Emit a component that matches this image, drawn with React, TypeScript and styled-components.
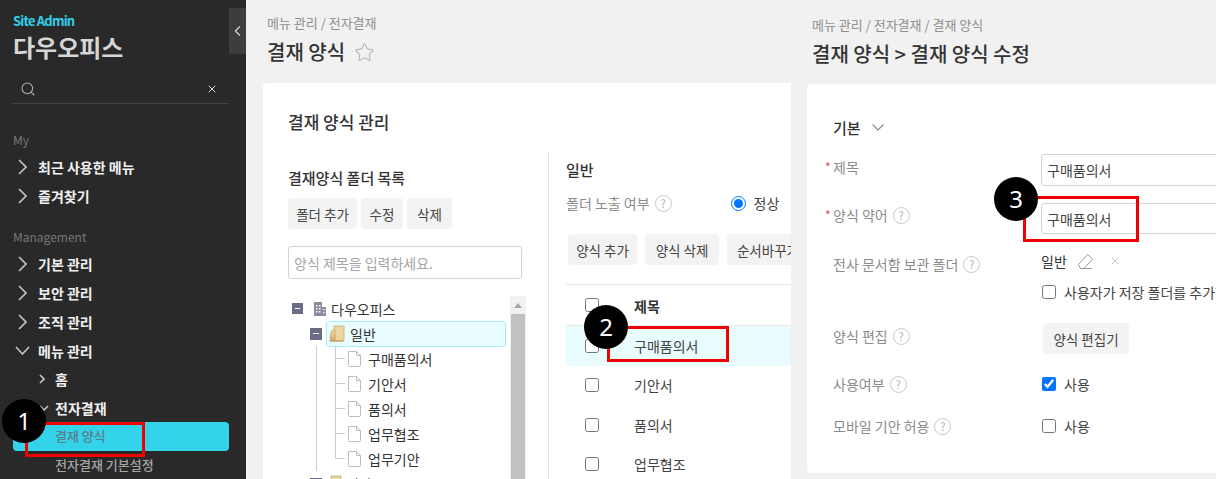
import React from "react";
import styled, { createGlobalStyle } from "styled-components";
import { Search, X, Star, ChevronLeft } from "lucide-react";

const Global = createGlobalStyle`
  html, body { margin: 0; padding: 0; background: #f1f1f1; }
  body { font-family: "Noto Sans CJK KR", "Noto Sans", sans-serif; }
  * { box-sizing: border-box; }
`;

const Page = styled.div`
  position: relative;
  width: 1216px;
  height: 479px;
  overflow: hidden;
  display: flex;
  background: #f1f1f1;
`;

/* ---------- sidebar ---------- */
const Sidebar = styled.aside`
  position: relative;
  width: 246px;
  flex: none;
  height: 100%;
  background: #292929;
  padding: 13px 17px 0 13px;
`;
const CollapseTab = styled.div`
  position: absolute;
  left: 229px;
  top: 8px;
  width: 17px;
  height: 46px;
  background: #3d3d3d;
  color: #d8d8d8;
  display: flex;
  align-items: center;
  justify-content: center;
`;
const SiteAdmin = styled.div`
  font-size: 13px;
  line-height: 16px;
  font-weight: 700;
  letter-spacing: -0.8px;
  color: #2fd0ea;
`;
const Brand = styled.div`
  font-size: 24px;
  line-height: 36px;
  font-weight: 700;
  color: #d6d6d6;
`;
const SearchBox = styled.div`
  margin-top: 9px;
  height: 30px;
  border-bottom: 1px solid #444;
  display: flex;
  align-items: center;
  justify-content: space-between;
  padding: 0 11px 0 7px;
  color: #b0b0b0;
`;
const SectionLabel = styled.div<{ $top: number }>`
  margin-top: ${(p) => p.$top}px;
  margin-bottom: 2px;
  font-size: 12px;
  line-height: 21px;
  color: #777;
`;
const NavRow = styled.div<{ $pad: number; $iconW: number; $h: number }>`
  display: flex;
  align-items: center;
  height: ${(p) => p.$h}px;
  padding-left: ${(p) => p.$pad}px;
  color: #f0f0f0;
  font-size: 14px;
  font-weight: 700;
  white-space: nowrap;
  & > svg {
    flex: none;
    margin-right: ${(p) => p.$iconW}px;
  }
`;
const SubLink = styled.div<{ $active?: boolean }>`
  height: 29px;
  display: flex;
  align-items: center;
  padding: 0 0 2px 42px;
  font-size: 13px;
  font-weight: 500;
  color: ${(p) => (p.$active ? "#5c7d86" : "#a6a6a6")};
  background: ${(p) => (p.$active ? "#33d3ea" : "transparent")};
  border-radius: 4px;
`;

const ChevR = ({ w, h }: { w: number; h: number }) => (
  <svg width={w} height={h} viewBox={`0 0 ${w} ${h}`} fill="none" stroke="#c4c4c4" strokeWidth="1.6">
    <path d={`M1 1 L${w - 1} ${h / 2} L1 ${h - 1}`} />
  </svg>
);
const ChevD = ({ w, h }: { w: number; h: number }) => (
  <svg width={w} height={h} viewBox={`0 0 ${w} ${h}`} fill="none" stroke="#c4c4c4" strokeWidth="1.6">
    <path d={`M1 1 L${w / 2} ${h - 1} L${w - 1} 1`} />
  </svg>
);

/* ---------- panels ---------- */
const Panel = styled.main<{ $w: number; $top: number; $gap: number; $inset: number }>`
  width: ${(p) => p.$w}px;
  flex: none;
  padding-top: ${(p) => p.$top}px;
  & > header {
    padding-left: 21px;
    height: ${(p) => p.$gap}px;
  }
  & > section {
    margin-left: ${(p) => p.$inset}px;
  }
`;
const Crumb = styled.div`
  font-size: 13px;
  line-height: 18px;
  color: #8f8f8f;
  white-space: nowrap;
`;
const TitleRow = styled.div`
  margin-top: 6px;
  display: flex;
  align-items: center;
  gap: 9px;
  height: 28px;
  color: #b5b5b5;
`;
const PageTitle = styled.h1`
  margin: 0;
  font-size: 20px;
  line-height: 28px;
  font-weight: 500;
  color: #333;
  white-space: nowrap;
`;
const Card = styled.section<{ $h?: number }>`
  background: #fff;
  border-radius: 4px 0 0 4px;
  height: ${(p) => (p.$h ? `${p.$h}px` : "auto")};
  overflow: hidden;
`;
const ManageCard = styled(Card)`
  padding: 27px 0 0 25px;
  height: 400px;
`;
const CardTitle = styled.h2`
  margin: 0 0 18px;
  font-size: 17px;
  line-height: 24px;
  font-weight: 500;
  color: #333;
`;
const Columns = styled.div`
  display: flex;
`;
const FolderCol = styled.div`
  width: 260px;
  flex: none;
  padding-top: 15px;
`;
const SubTitle = styled.h3`
  margin: 0;
  font-size: 15px;
  line-height: 22px;
  font-weight: 500;
  color: #333;
`;
const Buttons = styled.div<{ $gap: number; $top: number; $left?: number }>`
  display: flex;
  gap: ${(p) => p.$gap}px;
  margin-top: ${(p) => p.$top}px;
  margin-left: ${(p) => p.$left ?? 0}px;
`;
const Btn = styled.div<{ $w: number }>`
  width: ${(p) => p.$w}px;
  height: 31px;
  flex: none;
  display: flex;
  align-items: center;
  justify-content: center;
  background: #f3f3f3;
  border-radius: 4px;
  font-size: 13.5px;
  color: #444;
  white-space: nowrap;
  overflow: hidden;
`;
const FieldInput = styled.div<{ $w: number; $h: number }>`
  width: ${(p) => p.$w}px;
  height: ${(p) => p.$h}px;
  border: 1px solid #d4d4d4;
  border-radius: 3px;
  padding: 0 5px;
  display: flex;
  align-items: center;
  font-size: 14px;
  color: #444;
  flex: none;
`;
const SearchField = styled(FieldInput)`
  margin-top: 17px;
  color: #a5a5a5;
`;

/* ---------- tree ---------- */
const TreeWrap = styled.div`
  margin-top: 17px;
  display: flex;
  width: 238px;
`;
const Tree = styled.div`
  width: 222px;
  flex: none;
`;
const TreeRow = styled.div<{ $pad: number; $gap: number; $vline?: boolean; $stub?: boolean; $last?: boolean }>`
  position: relative;
  height: 25px;
  display: flex;
  align-items: center;
  gap: ${(p) => p.$gap}px;
  padding-left: ${(p) => p.$pad}px;
  font-size: 14px;
  color: #333;
  white-space: nowrap;
  ${(p) =>
    p.$stub
      ? `&::before { content: ""; position: absolute; left: 47px; top: 0; height: ${p.$last ? "13px" : "25px"}; width: 10px; border-left: 1px solid #ccc; }
         &::after { content: ""; position: absolute; left: 47px; top: 12px; width: 10px; border-top: 1px solid #ccc; }`
      : ""}
  ${(p) =>
    p.$vline
      ? `background: linear-gradient(#ccc, #ccc) 28px 0 / 1px 100% no-repeat;`
      : ""}
`;
const Minus = styled.span<{ $s: number; $after?: number }>`
  width: ${(p) => p.$s}px;
  height: ${(p) => p.$s}px;
  flex: none;
  margin-right: ${(p) => p.$after ?? 0}px;
  background: #6a6d85;
  display: flex;
  align-items: center;
  justify-content: center;
  &::after {
    content: "";
    width: ${(p) => p.$s - 6}px;
    height: 1px;
    background: #fff;
  }
`;
const Selected = styled.div`
  width: 180px;
  height: 26px;
  border: 1px solid #a5effa;
  border-radius: 3px;
  background: #e9fcff;
  display: flex;
  align-items: center;
  gap: 5px;
  padding-left: 2px;
`;
const Scrollbar = styled.div`
  width: 16px;
  flex: none;
  background: #f1f1f1;
  height: 190px;
  padding: 0 1px;
`;
const ScrollUp = styled.div`
  height: 18px;
  display: flex;
  align-items: center;
  justify-content: center;
  &::after {
    content: "";
    border: 4px solid transparent;
    border-top: 0;
    border-bottom: 5px solid #a8a8a8;
  }
`;
const ScrollThumb = styled.div`
  height: 170px;
  background: #c1c1c1;
`;

const BuildingIcon = () => (
  <svg width="14" height="16" viewBox="0 0 14 16">
    <path d="M1 1h8v14H1z M9 6h4v9H9z" fill="#8b8d9f" />
    <g fill="#fff">
      <rect x="3" y="4" width="1.5" height="1.5" />
      <rect x="6" y="4" width="1.5" height="1.5" />
      <rect x="3" y="7" width="1.5" height="1.5" />
      <rect x="6" y="7" width="1.5" height="1.5" />
      <rect x="3" y="10" width="1.5" height="1.5" />
      <rect x="6" y="10" width="1.5" height="1.5" />
      <rect x="10.3" y="8" width="1.4" height="1.4" />
      <rect x="10.3" y="11" width="1.4" height="1.4" />
    </g>
  </svg>
);
const FolderIcon = () => (
  <svg width="16" height="17" viewBox="0 0 16 17">
    <defs>
      <linearGradient id="fg" x1="0" y1="0" x2="0" y2="1">
        <stop offset="0" stopColor="#f7e6b4" />
        <stop offset="1" stopColor="#d0a960" />
      </linearGradient>
    </defs>
    <path d="M5 1h10v15H5z" fill="#e9d6a2" stroke="#c9ad6d" strokeWidth="0.8" />
    <path d="M1 16l1-9 3-3 1 1v11z" fill="url(#fg)" stroke="#c9a35a" strokeWidth="0.8" />
    <path d="M1 16h13" stroke="#c29a50" strokeWidth="1" />
  </svg>
);
const DocIcon = () => (
  <svg width="13" height="16" viewBox="0 0 13 16" fill="#fff" stroke="#bdbdbd">
    <path d="M0.5 0.5h8l4 4v10a1 1 0 0 1-1 1h-10a1 1 0 0 1-1-1z" />
    <path d="M8.5 0.5v4h4" fill="none" />
  </svg>
);

/* ---------- list column ---------- */
const ListCol = styled.div`
  flex: 1;
  border-left: 1px solid #e4e4e4;
  padding: 7px 0 0 17px;
  height: 340px;
  overflow: hidden;
`;
const ExposeRow = styled.div`
  margin-top: 10px;
  height: 24px;
  display: flex;
  align-items: center;
  font-size: 14px;
  color: #8c8c8c;
`;
const RadioLabel = styled.label`
  margin-left: 59px;
  display: flex;
  align-items: center;
  gap: 8px;
  color: #444;
  font-size: 14px;
`;
const Radio = styled.input`
  width: 15px;
  height: 15px;
  margin: 0;
`;
const Check = styled.input`
  width: 14px;
  height: 14px;
  margin: 0;
  flex: none;
`;
const HelpMark = styled.span`
  margin-left: 5px;
  width: 17px;
  height: 17px;
  flex: none;
  border: 1px solid #c8c8c8;
  border-radius: 50%;
  display: inline-flex;
  align-items: center;
  justify-content: center;
  font-size: 11px;
  line-height: 1;
  color: #b0b0b0;
`;
const Table = styled.div`
  margin-top: 19px;
  border-top: 1px solid #e4e4e4;
`;
const HeadRow = styled.div`
  height: 41px;
  display: flex;
  align-items: center;
  padding-left: 19px;
  border-bottom: 1px solid #e8e8e8;
  font-size: 14px;
  font-weight: 700;
  color: #333;
  & > span {
    margin-left: 35px;
    padding-top: 1px;
  }
`;
const BodyRow = styled.div<{ $hl?: boolean }>`
  height: 39.5px;
  display: flex;
  align-items: center;
  padding-left: 19px;
  font-size: 14px;
  color: #444;
  background: ${(p) => (p.$hl ? "#e8fbfd" : "transparent")};
  & > span {
    margin-left: 35px;
  }
`;

/* ---------- edit form ---------- */
const EditCard = styled(Card)`
  padding: 31px 0 0 26px;
`;
const FoldHead = styled.div`
  height: 24px;
  display: flex;
  align-items: center;
  gap: 11px;
  font-size: 15px;
  font-weight: 500;
  color: #333;
  margin-bottom: 15px;
`;
const FormRow = styled.div<{ $h: number; $labelTop: number }>`
  height: ${(p) => p.$h}px;
  display: grid;
  grid-template-columns: 208px 1fr;
  & > label {
    padding-top: ${(p) => p.$labelTop}px;
  }
`;
const Label = styled.label`
  display: flex;
  align-items: flex-start;
  height: 24px;
  font-size: 14px;
  line-height: 20px;
  color: #8c8c8c;
  position: relative;
  white-space: nowrap;
  & > span {
    margin-top: 2px;
  }
`;
const Req = styled.i`
  position: absolute;
  left: -8px;
  font-style: normal;
  color: #e2504c;
  font-size: 12px;
`;
const Value = styled.div`
  display: flex;
  flex-direction: column;
  align-items: flex-start;
  font-size: 14px;
  color: #444;
  white-space: nowrap;
`;
const CheckLine = styled.div<{ $top?: number; $left?: number }>`
  display: flex;
  align-items: center;
  gap: 8px;
  height: 20px;
  margin-top: ${(p) => p.$top ?? 0}px;
  margin-left: ${(p) => p.$left ?? 1}px;
  font-size: 14px;
  color: #444;
`;
const FolderValue = styled.div`
  height: 18px;
  margin-top: -1px;
  display: flex;
  align-items: center;
  font-size: 14px;
  color: #333;
  & > svg:first-of-type {
    margin-left: 10px;
  }
  & > svg:last-of-type {
    margin-left: 15px;
    color: #a0a0a0;
  }
`;
const BtnOffset = styled.div`
  margin-left: 2px;
`;

/* ---------- annotations ---------- */
const RedBox = styled.div<{ $x: number; $y: number; $w: number; $h: number }>`
  position: absolute;
  left: ${(p) => p.$x}px;
  top: ${(p) => p.$y}px;
  width: ${(p) => p.$w}px;
  height: ${(p) => p.$h}px;
  border: 3px solid #f00000;
`;
const Badge = styled.div<{ $x: number; $y: number }>`
  position: absolute;
  left: ${(p) => p.$x}px;
  top: ${(p) => p.$y}px;
  width: 44px;
  height: 44px;
  border-radius: 50%;
  background: #000;
  color: #fff;
  font-family: "Noto Sans", sans-serif;
  font-size: 24px;
  line-height: 44px;
  text-align: center;
`;

const PenIcon = () => (
  <svg width="17" height="17" viewBox="0 0 17 17" fill="none" stroke="#9a9a9a" strokeWidth="1">
    <path d="M1.5 11.5L10.5 1.5l5 4.5-8.5 9.5H3.5z" />
    <path d="M3.5 15.5H15" />
  </svg>
);

export default function App() {
  return (
    <Page>
      <Global />
      <Sidebar>
        <SiteAdmin>Site Admin</SiteAdmin>
        <Brand>다우오피스</Brand>
        <SearchBox>
          <Search size={16} strokeWidth={1.6} />
          <X size={12} strokeWidth={2} color="#ddd" />
        </SearchBox>
        <SectionLabel $top={25}>My</SectionLabel>
        <NavRow $pad={5} $iconW={11} $h={29}><ChevR w={9} h={16} />최근 사용한 메뉴</NavRow>
        <NavRow $pad={5} $iconW={11} $h={29}><ChevR w={9} h={16} />즐겨찾기</NavRow>
        <SectionLabel $top={16}>Management</SectionLabel>
        <NavRow $pad={5} $iconW={11} $h={29}><ChevR w={9} h={16} />기본 관리</NavRow>
        <NavRow $pad={5} $iconW={11} $h={29}><ChevR w={9} h={16} />보안 관리</NavRow>
        <NavRow $pad={5} $iconW={11} $h={29}><ChevR w={9} h={16} />조직 관리</NavRow>
        <NavRow $pad={2} $iconW={8} $h={29}><ChevD w={15} h={9} />메뉴 관리</NavRow>
        <NavRow $pad={26} $iconW={10} $h={28}><ChevR w={6} h={10} />홈</NavRow>
        <NavRow $pad={26} $iconW={6} $h={29}><ChevD w={10} h={6} />전자결재</NavRow>
        <SubLink $active>결재 양식</SubLink>
        <SubLink>전자결재 기본설정</SubLink>
        <CollapseTab><ChevronLeft size={20} strokeWidth={1.6} /></CollapseTab>
      </Sidebar>

      <Panel $w={545} $top={14} $gap={69} $inset={17}>
        <header>
          <Crumb>메뉴 관리 / 전자결재</Crumb>
          <TitleRow>
            <PageTitle>결재 양식</PageTitle>
            <Star size={21} strokeWidth={1.2} />
          </TitleRow>
        </header>
        <ManageCard>
          <CardTitle>결재 양식 관리</CardTitle>
          <Columns>
            <FolderCol>
              <SubTitle>결재양식 폴더 목록</SubTitle>
              <Buttons $gap={4} $top={9}>
                <Btn $w={69}>폴더 추가</Btn>
                <Btn $w={42}>수정</Btn>
                <Btn $w={45}>삭제</Btn>
              </Buttons>
              <SearchField $w={234} $h={33}>양식 제목을 입력하세요.</SearchField>
              <TreeWrap>
                <Tree>
                  <TreeRow $pad={4} $gap={4}><Minus $s={11} $after={6} /><BuildingIcon />다우오피스</TreeRow>
                  <TreeRow $pad={22} $gap={4}><Minus $s={12} /><Selected><FolderIcon />일반</Selected></TreeRow>
                  {["구매품의서", "기안서", "품의서", "업무협조", "업무기안"].map((t, i) => (
                    <TreeRow key={t} $pad={60} $gap={7} $vline $stub $last={i === 4}><DocIcon />{t}</TreeRow>
                  ))}
                  <TreeRow $pad={22} $gap={4}><Minus $s={12} /><FolderIcon />인사</TreeRow>
                </Tree>
                <Scrollbar>
                  <ScrollUp />
                  <ScrollThumb />
                </Scrollbar>
              </TreeWrap>
            </FolderCol>
            <ListCol>
              <SubTitle>일반</SubTitle>
              <ExposeRow>
                폴더 노출 여부<HelpMark>?</HelpMark>
                <RadioLabel><Radio type="radio" defaultChecked />정상</RadioLabel>
              </ExposeRow>
              <Buttons $gap={8} $top={19} $left={2}>
                <Btn $w={69}>양식 추가</Btn>
                <Btn $w={74}>양식 삭제</Btn>
                <Btn $w={82}>순서바꾸기</Btn>
              </Buttons>
              <Table>
                <HeadRow><Check type="checkbox" /><span>제목</span></HeadRow>
                <BodyRow $hl><Check type="checkbox" /><span>구매품의서</span></BodyRow>
                <BodyRow><Check type="checkbox" /><span>기안서</span></BodyRow>
                <BodyRow><Check type="checkbox" /><span>품의서</span></BodyRow>
                <BodyRow><Check type="checkbox" /><span>업무협조</span></BodyRow>
              </Table>
            </ListCol>
          </Columns>
        </ManageCard>
      </Panel>

      <Panel $w={425} $top={16} $gap={68} $inset={16}>
        <header>
          <Crumb>메뉴 관리 / 전자결재 / 결재 양식</Crumb>
          <TitleRow>
            <PageTitle>결재 양식 &gt; 결재 양식 수정</PageTitle>
          </TitleRow>
        </header>
        <EditCard $h={389}>
          <FoldHead>
            기본
            <svg width="12" height="7" viewBox="0 0 12 7" fill="none" stroke="#888" strokeWidth="1.1"><path d="M0.5 0.5L6 6L11.5 0.5" /></svg>
          </FoldHead>
          <FormRow $h={49} $labelTop={3}>
            <Label><Req>*</Req>제목</Label>
            <Value><FieldInput $w={220} $h={32}>구매품의서</FieldInput></Value>
          </FormRow>
          <FormRow $h={50} $labelTop={2}>
            <Label><Req>*</Req>양식 약어<HelpMark>?</HelpMark></Label>
            <Value><FieldInput $w={220} $h={31}>구매품의서</FieldInput></Value>
          </FormRow>
          <FormRow $h={70} $labelTop={1}>
            <Label>전사 문서함 보관 폴더<HelpMark>?</HelpMark></Label>
            <Value>
              <FolderValue>일반<PenIcon /><X size={12} strokeWidth={1.2} /></FolderValue>
              <CheckLine $top={12}><Check type="checkbox" />사용자가 저장 폴더를 추가할 수 있습니다</CheckLine>
            </Value>
          </FormRow>
          <FormRow $h={49} $labelTop={3}>
            <Label>양식 편집<HelpMark>?</HelpMark></Label>
            <Value><BtnOffset><Btn $w={86}>양식 편집기</Btn></BtnOffset></Value>
          </FormRow>
          <FormRow $h={42} $labelTop={2}>
            <Label>사용여부<HelpMark>?</HelpMark></Label>
            <Value><CheckLine $top={2}><Check type="checkbox" defaultChecked />사용</CheckLine></Value>
          </FormRow>
          <FormRow $h={30} $labelTop={2}>
            <Label>모바일 기안 허용<HelpMark>?</HelpMark></Label>
            <Value><CheckLine $top={2}><Check type="checkbox" />사용</CheckLine></Value>
          </FormRow>
        </EditCard>
      </Panel>

      <RedBox $x={25} $y={422} $w={120} $h={35} />
      <Badge $x={2} $y={399}>1</Badge>
      <RedBox $x={607} $y={326} $w={122} $h={36} />
      <Badge $x={584} $y={305}>2</Badge>
      <RedBox $x={1023} $y={196} $w={116} $h={46} />
      <Badge $x={994} $y={177}>3</Badge>
    </Page>
  );
}
